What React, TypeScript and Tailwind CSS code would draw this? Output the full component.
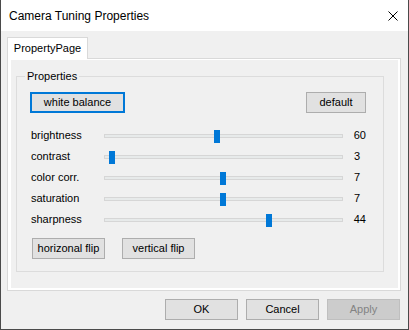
const sliders = [
  { label: "brightness", value: 60, thumb: "left-[109px]" },
  { label: "contrast", value: 3, thumb: "left-[4px]" },
  { label: "color corr.", value: 7, thumb: "left-[115px]" },
  { label: "saturation", value: 7, thumb: "left-[115px]" },
  { label: "sharpness", value: 44, thumb: "left-[161px]" },
];

function Btn({ children, className = "", look = "border border-[#adadad] bg-[#e1e1e1]" }: { children: React.ReactNode; className?: string; look?: string }) {
  return (
    <button className={"h-[21px] flex items-center justify-center leading-none " + look + " " + className}>
      {children}
    </button>
  );
}

export default function App() {
  return (
    <div className="w-[409px] h-[330px] flex flex-col bg-[#f0f0f0] border-x border-b border-[#4a4a4a] font-['Liberation_Sans',Arial,sans-serif] text-[11px] text-black">
      {/* title bar */}
      <div className="h-[31px] bg-white flex items-center justify-between pl-[8px] pr-[10px]">
        <span className="text-[12px]">Camera Tuning Properties</span>
        <svg width="10" height="10" viewBox="0 0 10 10">
          <path d="M0.5 0.5 L9.5 9.5 M9.5 0.5 L0.5 9.5" stroke="#000" strokeWidth="1" />
        </svg>
      </div>

      <div className="flex-1 flex flex-col px-[6px] pt-[6px]">
        <div className="relative z-10 -mb-px w-[81px] h-[22px] border border-b-0 border-[#d9d9d9] bg-white flex items-center justify-center">
          PropertyPage
        </div>

        <div className="w-[394px] h-[233px] border border-[#d9d9d9] bg-white pl-[3px] pt-[1px] pr-[2px] pb-[2px]">
          <div className="w-full h-full bg-[#f0f0f0] pl-[5px] pt-[16px]">
            <div className="relative w-[368px] h-[196px] border border-[#dcdcdc] pt-[15px] pl-[13px] pr-[17px]">
              <span className="absolute -top-[8px] left-[8px] px-[2px] leading-[14px] bg-[#f0f0f0]">Properties</span>

              <div className="flex justify-between">
                <Btn className="w-[95px]" look="border-2 border-[#0078d7] bg-[#e1e1e1]">white balance</Btn>
                <Btn className="w-[60px]">default</Btn>
              </div>

              <div className="mt-[12px] flex flex-col">
                {sliders.map((s) => (
                  <div key={s.label} className="h-[21px] flex items-center pl-[1px]">
                    <span className="w-[73px]">{s.label}</span>
                    <div className="relative w-[239px] h-[4px] border border-[#d6d6d6] bg-[#e7eaea]">
                      <div className={"absolute -top-[5px] w-[6px] h-[13px] bg-[#0078d7] " + s.thumb} />
                    </div>
                    <span className="ml-[11px]">{s.value}</span>
                  </div>
                ))}
              </div>

              <div className="mt-[8px] ml-[2px] flex gap-[17px]">
                <Btn className="w-[73px]">horizonal flip</Btn>
                <Btn className="w-[73px]">vertical flip</Btn>
              </div>
            </div>
          </div>
        </div>

        <div className="mt-[8px] pr-[2px] flex justify-end gap-[8px]">
          <Btn className="w-[73px]">OK</Btn>
          <Btn className="w-[73px]">Cancel</Btn>
          <Btn className="w-[73px] text-[#838383]" look="border border-[#bfbfbf] bg-[#cccccc]">Apply</Btn>
        </div>
      </div>
    </div>
  );
}
